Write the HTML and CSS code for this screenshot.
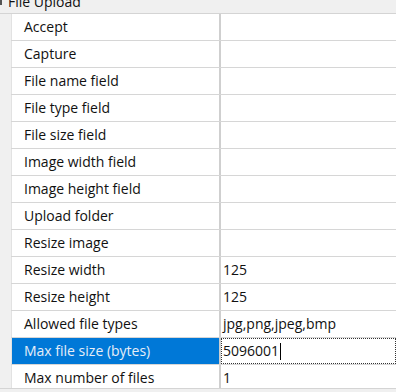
FILE: index.html
```html
<!DOCTYPE html>
<html lang="en">
<head>
    <meta charset="UTF-8">
    <title>File Upload properties</title>
    <link rel="stylesheet" href="styles.css">
</head>
<body>
    <div class="grid">
        <div class="category"><span class="toggle"></span>File Upload</div>
        <div class="row"><div class="name">Accept</div><div class="value"></div></div>
        <div class="row"><div class="name">Capture</div><div class="value"></div></div>
        <div class="row"><div class="name">File name field</div><div class="value"></div></div>
        <div class="row"><div class="name">File type field</div><div class="value"></div></div>
        <div class="row"><div class="name">File size field</div><div class="value"></div></div>
        <div class="row"><div class="name">Image width field</div><div class="value"></div></div>
        <div class="row"><div class="name">Image height field</div><div class="value"></div></div>
        <div class="row"><div class="name">Upload folder</div><div class="value"></div></div>
        <div class="row"><div class="name">Resize image</div><div class="value"></div></div>
        <div class="row"><div class="name">Resize width</div><div class="value">125</div></div>
        <div class="row"><div class="name">Resize height</div><div class="value">125</div></div>
        <div class="row"><div class="name">Allowed file types</div><div class="value">jpg,png,jpeg,bmp</div></div>
        <div class="row selected"><div class="name">Max file size (bytes)</div><div class="value editing">5096001<span class="caret"></span></div></div>
        <div class="row"><div class="name">Max number of files</div><div class="value">1</div></div>
    </div>
</body>
</html>
```

FILE: styles.css
```css
body {
    margin: 0;
    background: #f0f0f0;
    font-family: "Open Sans", "Noto Sans", sans-serif;
    font-size: 14px;
    color: #111;
}
.grid {
    height: 389px;
    overflow: hidden;
    border-bottom: 1px solid #d4d4d4;
    box-sizing: border-box;
}
.category {
    height: 13px;
    line-height: 4px;
    padding-left: 8px;
    border-bottom: 1px solid #d4d4d4;
    overflow: hidden;
    display: flex;
    align-items: flex-start;
}
.toggle {
    width: 2px;
    height: 5px;
    background: #555;
    margin-left: -8px;
    margin-right: 6px;
}
.row {
    display: flex;
    height: 26px;
    margin-left: 11px;
    border-bottom: 1px solid #d6d6d6;
    background: white;
}
.name {
    width: 195px;
    padding-left: 12px;
    border-left: 1px solid #e2e2e2;
    border-right: 2px solid #cfcfcf;
    line-height: 26px;
    white-space: nowrap;
}
.value {
    flex: 1;
    padding-left: 2px;
    line-height: 26px;
    white-space: nowrap;
}
.selected .name {
    background: #0078d7;
    color: #e6eef8;
}
.value.editing {
    border: 1px dotted #333;
    line-height: 24px;
    padding-left: 1px;
    display: flex;
    align-items: center;
}
.caret {
    width: 1px;
    height: 17px;
    background: #000;
    margin-left: 1px;
}
```
